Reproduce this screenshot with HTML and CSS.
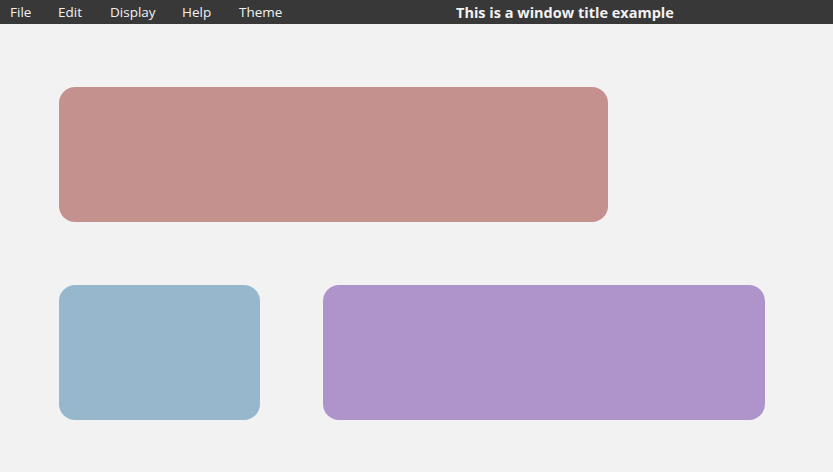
FILE: index.html
```html
<!DOCTYPE html>
<html>
<head>
<meta charset="utf-8">
<link rel="stylesheet" href="styles.css">
</head>
<body>
<div class="menubar">
  <nav class="menu">
    <span class="item item-file">File</span>
    <span class="item item-edit">Edit</span>
    <span class="item item-display">Display</span>
    <span class="item item-help">Help</span>
    <span class="item item-theme">Theme</span>
  </nav>
  <div class="title">This is a window title example</div>
</div>
<main class="content">
  <div class="row">
    <div class="card card-red"></div>
  </div>
  <div class="row">
    <div class="card card-blue"></div>
    <div class="card card-purple"></div>
  </div>
</main>
</body>
</html>
```
FILE: styles.css
```css
html, body {
  margin: 0;
  padding: 0;
  background: #f2f2f2;
  width: 833px;
  height: 472px;
  overflow: hidden;
}
.menubar {
  height: 24px;
  background: #383838;
  color: #f2f2f2;
  display: flex;
  align-items: center;
  font-family: "Open Sans", "Noto Sans", sans-serif;
  font-size: 13.5px;
}
.menu {
  display: flex;
  padding-left: 10px;
}
.item-file { width: 48px; }
.item-edit { width: 52px; }
.item-display { width: 72px; }
.item-help { width: 57px; }
.item-theme { width: 60px; }
.title {
  margin-left: 157px;
  font-weight: bold;
  font-size: 14.5px;
}
.content {
  padding: 63px 0 0 59px;
  display: flex;
  flex-direction: column;
  gap: 63px;
}
.row {
  display: flex;
  gap: 63px;
}
.card {
  height: 135px;
  border-radius: 16px;
}
.card-red { width: 549px; background: #c4918f; }
.card-blue { width: 201px; background: #96b7cc; }
.card-purple { width: 442px; background: #ae94cb; }
```
